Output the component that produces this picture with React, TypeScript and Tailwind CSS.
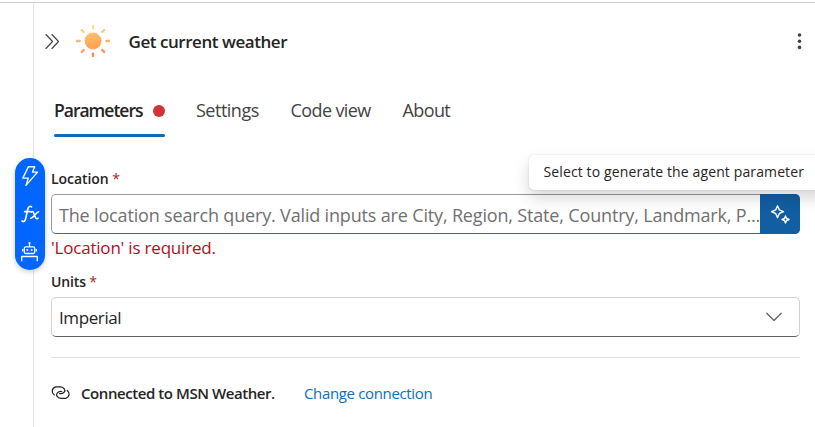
import React from 'react';

function SunIcon() {
  const rays = [
    ['M93 25.8v2.6', '#fddd8a'],
    ['M104.2 30l-2 2', '#fec27a'],
    ['M109 41h-2.6', '#feb066'],
    ['M104.2 52l-2-2', '#fc8d5d'],
    ['M93 56.2v-2.6', '#fb8a62'],
    ['M81.8 52l2-2', '#fc9b62'],
    ['M77 41h2.6', '#feb672'],
    ['M81.8 30l2 2', '#fdd07a'],
  ];
  return (
    <svg className="size-9" viewBox="75 23 36 36" fill="none">
      <defs>
        <linearGradient id="sun" x1="0" y1="0" x2="0.3" y2="1">
          <stop stopColor="#ffc27a" />
          <stop offset="1" stopColor="#ffa347" />
        </linearGradient>
      </defs>
      <circle cx="93" cy="41" r="8.4" fill="url(#sun)" />
      {rays.map(([d, color]) => (
        <path key={d} d={d} stroke={color} strokeWidth="2.3" strokeLinecap="round" />
      ))}
    </svg>
  );
}

function TokenToolbar() {
  return (
    <div className="absolute left-[15px] top-[158px] flex h-28 w-[30px] flex-col items-center rounded-[15px] bg-[#0066ff] text-white shadow-[0_2px_5px_rgba(0,0,0,0.2)]">
      <svg className="h-[37px] w-[30px]" viewBox="0 0 30 37" fill="none" stroke="currentColor" strokeWidth="1.4" strokeLinejoin="round">
        <path d="M13.4 8.7h6.3l-2.2 5.4h5L11 27.4l2.3-7.3H7.8z" />
      </svg>
      <svg className="h-[37px] w-[30px]" viewBox="0 37 30 37" fill="none" stroke="currentColor" strokeWidth="1.6" strokeLinecap="round">
        <path d="M16.6 48.9c-1.6-1.1-3.2-.2-3.7 1.9l-2.3 9.9c-.6 2.6-2 3.4-3.6 2.3M9.6 53.6h5.6" />
        <path d="M16.2 54.1c1.1-.9 1.9-.6 2.4.6l2 5.1c.5 1.3 1.4 1.3 2.5.3M23.6 53.7c-2.6.4-4.6 5.9-7.8 6.5" />
      </svg>
      <svg className="h-[38px] w-[30px]" viewBox="0 74 30 38" fill="none" stroke="currentColor" strokeWidth="1.3" strokeLinejoin="round">
        <path d="M14.5 85v4" />
        <circle cx="14.5" cy="85" r="1.1" fill="currentColor" stroke="none" />
        <rect x="9.3" y="88.8" width="10.4" height="6.7" rx="1.5" />
        <path d="M7.7 91v2.5M21.3 91v2.5M6.7 103.2v-4.7h15.6v4.7" />
        <circle cx="12.3" cy="92" r="1" fill="currentColor" stroke="none" />
        <circle cx="16.7" cy="92" r="1" fill="currentColor" stroke="none" />
      </svg>
    </div>
  );
}

function FieldLabel({ text, spacing }: { text: string; spacing: string }) {
  return (
    <div className={`text-[14px] font-semibold leading-5 text-[#242424] ${spacing}`}>
      {text} <span className="font-normal text-[#a4262c]">*</span>
    </div>
  );
}

export default function App() {
  return (
    <div className="relative h-[427px] w-[815px] overflow-hidden bg-white pt-[2px] font-['Open_Sans','Noto_Sans',sans-serif] text-[#242424]">
      <div className="h-[425px] border-t border-[#d1d1d1] pl-[33px]">
        <main className="flex h-full flex-col border-l border-[#e5e5e5] pl-[17px] pr-[15px]">
          <header className="flex h-[77px] items-center pb-px">
            <svg className="-ml-[21px] size-[36px] shrink-0 translate-x-[3px]" viewBox="33 23 36 36" fill="none" stroke="#424242" strokeWidth="1.15" strokeLinecap="round" strokeLinejoin="round">
              <path d="M46 34.5l6.5 7-6.5 7M52 34.5l6.5 7-6.5 7" />
            </svg>
            <div className="ml-[9px] shrink-0"><SunIcon /></div>
            <h1 className="ml-[17.5px] grow whitespace-nowrap pt-[2px] text-[17px] font-semibold tracking-[-0.45px]">Get current weather</h1>
            <svg className="size-5 translate-x-[9.5px]" viewBox="0 0 20 20" fill="#424242">
              <circle cx="10" cy="4" r="1.8" />
              <circle cx="10" cy="10.2" r="1.8" />
              <circle cx="10" cy="16.4" r="1.8" />
            </svg>
          </header>

          <nav className="ml-[3px] flex h-[57px] items-start whitespace-nowrap pt-[18px] text-[18px] leading-[25px] text-[#424242]">
            <div className="flex h-[39px] w-[111px] flex-col justify-between">
              <div className="flex items-center justify-between text-[#242424]">
                <span className="text-[17.5px] font-semibold tracking-[-1px]">Parameters</span>
                <span className="size-3 rounded-full bg-[#d13438]" />
              </div>
              <span className="h-[3px] rounded-full bg-[#0f6cbd]" />
            </div>
            <span className="ml-[31px] w-[94.5px] tracking-[-0.5px]">Settings</span>
            <span className="w-28 tracking-[-0.6px]">Code view</span>
            <span className="tracking-[-0.6px]">About</span>
          </nav>

          <section className="mt-[32px]">
            <FieldLabel text="Location" spacing="tracking-[-0.05px]" />
            <div className="mt-[5px] flex h-10 rounded-[5px] border border-[#999] border-b-[#0078d4]">
              <div className="flex grow items-center overflow-hidden whitespace-nowrap pl-[7px] pt-[2px] text-[18px] tracking-[-0.165px] text-[#707070]">
                The location search query. Valid inputs are City, Region, State, Country, Landmark, P...
              </div>
              <button className="-m-px flex w-10 shrink-0 items-center justify-center rounded-r-[5px] bg-[#115ea3] text-white">
                <svg className="size-6" viewBox="0 0 24 24" fill="none" stroke="currentColor" strokeWidth="1.4" strokeLinejoin="round">
                  <path d="M9.5 3.8l1.8 4.1 4.2 1.8-4.2 1.8-1.8 4.2-1.8-4.2-4.2-1.8 4.2-1.8z" />
                  <path d="M17.5 14l1 2.5 2.5 1-2.5 1-1 2.5-1-2.5-2.5-1 2.5-1z" />
                </svg>
              </button>
            </div>
            <div className="h-[28px] text-[17px] leading-[27px] tracking-[-0.2px] text-[#b10e1c]">'Location' is required.</div>
          </section>

          <section className="mt-[10px]">
            <FieldLabel text="Units" spacing="tracking-[-0.15px]" />
            <div className="mt-[5px] flex h-10 items-center justify-between rounded-[5px] border border-[#d1d1d1] border-b-[#616161] pl-[7px] pr-[17px] text-[17px] tracking-[-0.4px]">
              <span className="pt-px">Imperial</span>
              <svg className="h-[10px] w-4" viewBox="0 0 16 10" fill="none" stroke="#616161" strokeWidth="1.3" strokeLinecap="round" strokeLinejoin="round">
                <path d="M.8 1.2L8 8.5l7.2-7.3" />
              </svg>
            </div>
          </section>

          <footer className="mt-5 flex items-center whitespace-nowrap border-t border-[#e0e0e0] pt-[25px] text-[15px] leading-5">
            <svg className="h-4 w-5 shrink-0" viewBox="51 385.5 20 16" fill="none" stroke="#242424" strokeWidth="1.25" strokeLinecap="round">
              <path d="M54.2 395.3C51.2 393 51.6 388.8 55.6 387.4h4.8c3.6.3 5.5 3.2 3.8 5.2-1.1 1.3-2.8 1.8-4.6 1.6" />
              <path d="M67.2 390.9c3 2.3 2.6 6.5-1.4 7.9h-4.8c-3.6-.3-5.5-3.2-3.8-5.2 1.1-1.3 2.8-1.8 4.6-1.6" />
            </svg>
            <span className="ml-[10px] w-[223px] font-semibold tracking-[-0.43px]">Connected to MSN Weather.</span>
            <a className="tracking-[-0.35px] text-[#0f6cbd]">Change connection</a>
          </footer>
        </main>
      </div>

      <TokenToolbar />
      <div className="absolute left-[529px] top-[155px] flex h-[35px] w-[300px] items-center whitespace-nowrap rounded-[5px] bg-white pb-[2px] pl-[14.5px] text-[14px] tracking-[0.12px] shadow-[0_0_2px_rgba(0,0,0,0.14),0_8px_16px_rgba(0,0,0,0.16)]">
        Select to generate the agent parameter
      </div>
    </div>
  );
}
